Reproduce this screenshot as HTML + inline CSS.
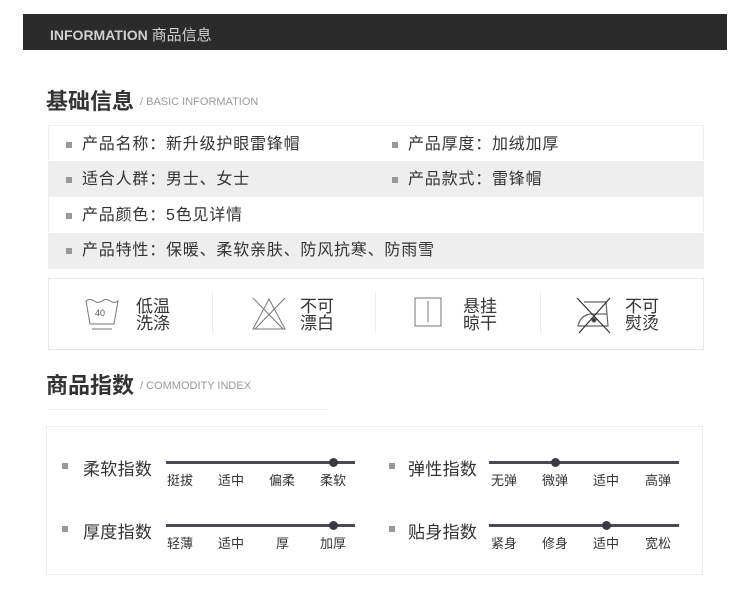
<!DOCTYPE html>
<html><head><meta charset="utf-8"><style>
*{margin:0;padding:0;box-sizing:border-box}
body{width:750px;height:591px;background:#fff;position:relative;font-family:"Liberation Sans","Noto Sans CJK SC",sans-serif;color:#333;overflow:hidden}
.a{position:absolute;white-space:nowrap}
.hdr{left:23px;top:14px;width:704px;height:36px;background:#2b2b2b}
.sq{position:absolute;width:6px;height:6px;background:#999}
.row{position:absolute;left:48px;width:656px;height:36px}
.t{font-size:16px;line-height:18px;letter-spacing:0.8px}
.line{position:absolute;height:3px;background:#4a4a55}
.dot{position:absolute;width:9px;height:9px;border-radius:50%;background:#3a3a45}
.sm{font-size:13px;color:#333}
.lb{font-size:17px;letter-spacing:0.3px}
.vl{position:absolute;top:292px;width:1px;height:42px;background:#eee}
</style></head><body>
<div class="a hdr"></div>
<div class="a" style="left:50px;top:24px;font-size:14px;font-weight:bold;color:#d0d0d0">INFORMATION <span style="font-weight:normal;font-size:15px">商品信息</span></div>

<div class="a" style="left:46px;top:84px;font-size:22px;font-weight:bold;color:#333">基础信息</div>
<div class="a" style="left:140px;top:96px;font-size:11px;color:#999">/ BASIC INFORMATION</div>

<div class="row" style="top:125px;border:1px solid #eee;border-bottom:none"></div>
<div class="row" style="top:161px;background:#eee"></div>
<div class="row" style="top:197px;border-left:1px solid #eee;border-right:1px solid #eee"></div>
<div class="row" style="top:233px;background:#eee"></div>
<div class="sq" style="left:66px;top:142px"></div><div class="a t" style="left:82px;top:136px">产品名称：新升级护眼雷锋帽</div>
<div class="sq" style="left:392px;top:142px"></div><div class="a t" style="left:408px;top:136px">产品厚度：加绒加厚</div>
<div class="sq" style="left:66px;top:177px"></div><div class="a t" style="left:82px;top:171px">适合人群：男士、女士</div>
<div class="sq" style="left:392px;top:177px"></div><div class="a t" style="left:408px;top:171px">产品款式：雷锋帽</div>
<div class="sq" style="left:66px;top:213px"></div><div class="a t" style="left:82px;top:207px">产品颜色：5色见详情</div>
<div class="sq" style="left:66px;top:248px"></div><div class="a t" style="left:82px;top:242px">产品特性：保暖、柔软亲肤、防风抗寒、防雨雪</div>

<div class="a" style="left:48px;top:278px;width:656px;height:72px;border:1px solid #e8e8e8"></div>
<div class="vl" style="left:212px"></div><div class="vl" style="left:375px"></div><div class="vl" style="left:540px"></div>
<svg class="a" style="left:82px;top:296px" width="40" height="38" viewBox="0 0 40 38" fill="none" stroke="#777" stroke-width="1">
<path d="M4 5 Q8 2 12 5 Q16 8 20 5 Q24 2 28 5 Q32 8 36 5 L32 28 L8 28 Z"/><path d="M10 33 H30"/>
<text x="13" y="20" font-size="9" fill="#555" stroke="none" font-family="Liberation Sans">40</text></svg>
<div class="a t" style="left:136px;top:298px;line-height:17px;font-size:17px;letter-spacing:0">低温<br>洗涤</div>
<svg class="a" style="left:250px;top:296px" width="38" height="36" viewBox="0 0 38 36" fill="none" stroke="#777" stroke-width="1">
<path d="M19 3 L35 33 H3 Z"/><path d="M3 2 L33 33 M35 2 L5 33"/></svg>
<div class="a t" style="left:300px;top:298px;line-height:17px;font-size:17px;letter-spacing:0">不可<br>漂白</div>
<svg class="a" style="left:413px;top:296px" width="32" height="34" viewBox="0 0 32 34" fill="none" stroke="#777" stroke-width="1">
<rect x="2" y="2" width="26" height="28"/><path d="M15 5 V26"/></svg>
<div class="a t" style="left:463px;top:298px;line-height:17px;font-size:17px;letter-spacing:0">悬挂<br>晾干</div>
<svg class="a" style="left:574px;top:296px" width="40" height="40" viewBox="0 0 40 40" fill="none" stroke="#666" stroke-width="1.2">
<path d="M10 6 H32 L34 30 H4 Q6 20 16 18 H33"/><circle cx="20" cy="24" r="2" fill="#333"/><path d="M3 2 L36 37 M36 2 L5 37" stroke="#333"/></svg>
<div class="a t" style="left:625px;top:298px;line-height:17px;font-size:17px;letter-spacing:0">不可<br>熨烫</div>

<div class="a" style="left:46px;top:368px;font-size:22px;font-weight:bold;color:#333">商品指数</div>
<div class="a" style="left:140px;top:380px;font-size:11px;color:#999">/ COMMODITY INDEX</div>
<div class="a" style="left:48px;top:409px;width:280px;height:1px;background:#eee"></div>
<div class="a" style="left:46px;top:426px;width:657px;height:149px;border:1px solid #eee"></div>

<div class="sq" style="left:62px;top:463px"></div><div class="a lb" style="left:83px;top:455px">柔软指数</div>
<div class="line" style="left:166px;top:461px;width:189px"></div><div class="dot" style="left:329px;top:458px"></div>
<div class="a sm" style="left:167px;top:470px">挺拔</div><div class="a sm" style="left:218px;top:470px">适中</div><div class="a sm" style="left:269px;top:470px">偏柔</div><div class="a sm" style="left:320px;top:470px">柔软</div>

<div class="sq" style="left:389px;top:463px"></div><div class="a lb" style="left:408px;top:455px">弹性指数</div>
<div class="line" style="left:489px;top:461px;width:190px"></div><div class="dot" style="left:551px;top:458px"></div>
<div class="a sm" style="left:491px;top:470px">无弹</div><div class="a sm" style="left:542px;top:470px">微弹</div><div class="a sm" style="left:593px;top:470px">适中</div><div class="a sm" style="left:645px;top:470px">高弹</div>

<div class="sq" style="left:62px;top:526px"></div><div class="a lb" style="left:83px;top:518px">厚度指数</div>
<div class="line" style="left:166px;top:524px;width:189px"></div><div class="dot" style="left:329px;top:521px"></div>
<div class="a sm" style="left:167px;top:533px">轻薄</div><div class="a sm" style="left:218px;top:533px">适中</div><div class="a sm" style="left:276px;top:533px">厚</div><div class="a sm" style="left:320px;top:533px">加厚</div>

<div class="sq" style="left:389px;top:526px"></div><div class="a lb" style="left:408px;top:518px">贴身指数</div>
<div class="line" style="left:489px;top:524px;width:190px"></div><div class="dot" style="left:602px;top:521px"></div>
<div class="a sm" style="left:491px;top:533px">紧身</div><div class="a sm" style="left:542px;top:533px">修身</div><div class="a sm" style="left:593px;top:533px">适中</div><div class="a sm" style="left:645px;top:533px">宽松</div>
</body></html>
